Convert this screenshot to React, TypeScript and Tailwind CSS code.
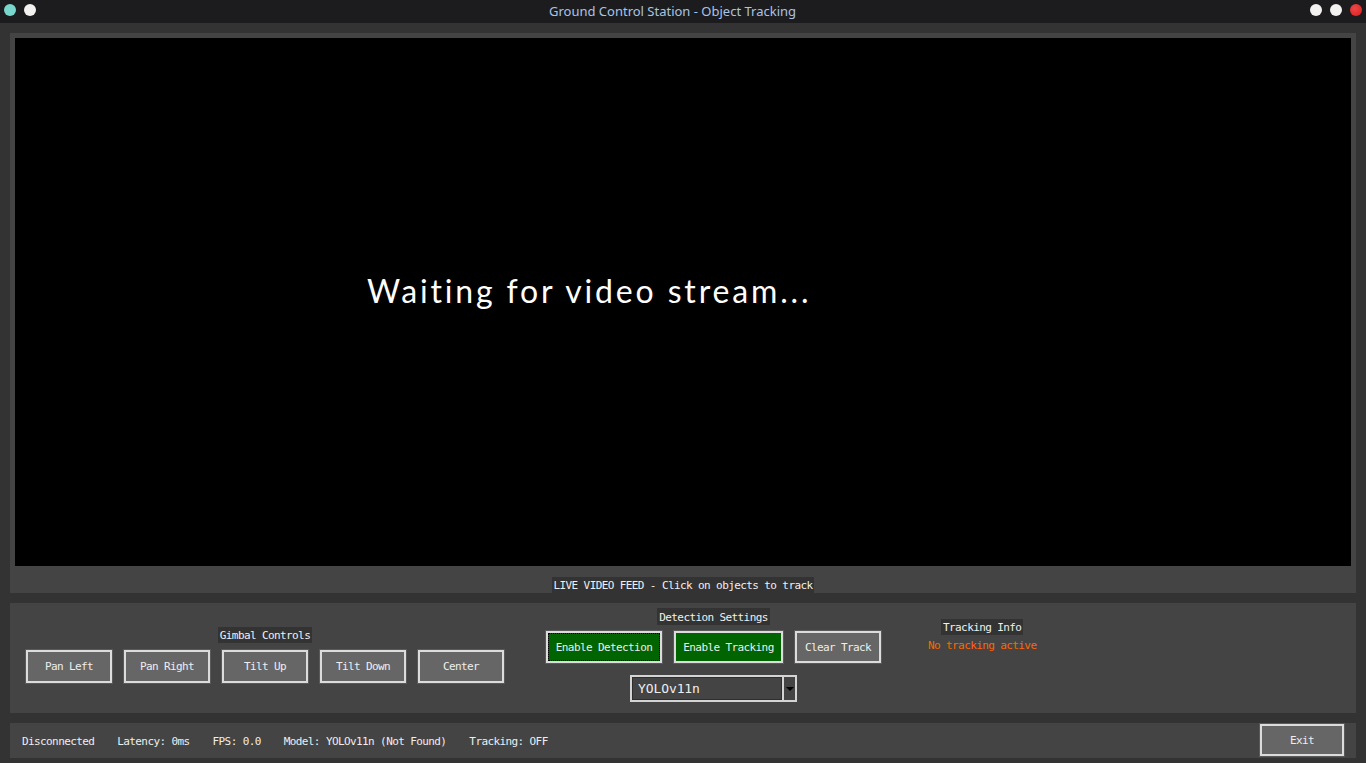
import React from 'react';

const mono = "font-['DejaVu_Sans_Mono','Liberation_Mono',monospace] text-[11px] tracking-[-0.6px]";

const Label: React.FC<{ text: string; className?: string }> = ({ text, className = '' }) => (
    <div className={`${mono} bg-[#333333] text-[#f0f0f0] px-[2px] h-[16px] leading-[18px] whitespace-nowrap overflow-hidden ${className}`}>
        {text}
    </div>
);

const TkButton: React.FC<{
    label: string;
    width: string;
    height?: string;
    green?: boolean;
    focused?: boolean;
}> = ({ label, width, height = 'h-[35px]', green, focused }) => (
    <button
        className={`${mono} ${width} ${height} shrink-0 pt-[2px] border border-[#5a5a5a] shadow-[inset_0_0_0_2px_#dcdcdc] text-[#eeeeee] flex items-center justify-center ${
            green ? 'bg-[#006400]' : 'bg-[#666666]'
        } ${focused ? 'outline outline-1 outline-dotted outline-black outline-offset-[-4px]' : ''}`}
    >
        {label}
    </button>
);

const Dot: React.FC<{ color: string }> = ({ color }) => (
    <div className={`w-[12px] h-[12px] rounded-full ${color}`}></div>
);

const TitleBar = () => (
    <div className="h-[23px] shrink-0 bg-[#1c1c1e] flex items-start">
        <div className="flex gap-[8px] pl-[4px] pt-[4px] w-[36px]">
            <Dot color="bg-[#79d6cc]" />
            <Dot color="bg-[#f4f1f1]" />
        </div>
        <div className="flex-1 text-center pr-[1px] font-['Noto_Sans',sans-serif] text-[13px] leading-[23px] text-[#aac4e4]">
            Ground Control Station - Object Tracking
        </div>
        <div className="flex gap-[8px] pr-[4px] pt-[4px]">
            <Dot color="bg-[#f4f1f1]" />
            <Dot color="bg-[#f4f1f1]" />
            <Dot color="bg-[radial-gradient(circle_at_40%_35%,#f04545,#d42020)]" />
        </div>
    </div>
);

const VideoPanel = () => (
    <div className="h-[560px] shrink-0 bg-[#444444] flex flex-col px-[5px] pt-[5px]">
        <div className="h-[528px] bg-black pl-[352px] pt-[237px]">
            <div className="font-['Lato',sans-serif] text-[32px] leading-[32px] tracking-[2.85px] text-white whitespace-nowrap">
                Waiting for video stream...
            </div>
        </div>
        <div className="flex-1 flex items-end justify-center">
            <Label text="LIVE VIDEO FEED - Click on objects to track" />
        </div>
    </div>
);

const ControlsPanel = () => (
    <div className="h-[110px] shrink-0 bg-[#444444] flex items-start">
        {/* Gimbal */}
        <div className="ml-[15px] mt-[24px] flex flex-col items-center gap-[6px]">
            <Label text="Gimbal Controls" />
            <div className="flex gap-[10px]">
                <TkButton label="Pan Left" width="w-[88px]" />
                <TkButton label="Pan Right" width="w-[88px]" />
                <TkButton label="Tilt Up" width="w-[88px]" />
                <TkButton label="Tilt Down" width="w-[88px]" />
                <TkButton label="Center" width="w-[88px]" />
            </div>
        </div>

        {/* Detection */}
        <div className="ml-[40px] mt-[5px] flex flex-col items-center">
            <Label text="Detection Settings" className="h-[17px] leading-[19px]" />
            <div className="flex gap-[10px] mt-[5px]">
                <TkButton label="Enable Detection" width="w-[118px]" height="h-[34px]" green focused />
                <TkButton label="Enable Tracking" width="w-[111px]" height="h-[34px]" green />
                <TkButton label="Clear Track" width="w-[88px]" height="h-[34px]" />
            </div>
            <div className="flex mt-[11px] h-[27px]">
                <div className="w-[154px] h-full border-2 border-[#d4d4d4] shadow-[inset_0_0_0_1px_#2e2e2e] flex items-center pl-[6px] pt-[1px] font-['DejaVu_Sans_Mono',monospace] text-[13px] tracking-[-0.1px] text-[#eeeeee]">
                    YOLOv11n
                </div>
                <div className="w-[13px] h-full border-2 border-l-0 border-[#d4d4d4] flex items-center justify-center">
                    <div className="w-0 h-0 border-l-[4px] border-r-[4px] border-t-[4px] border-l-transparent border-r-transparent border-t-black"></div>
                </div>
            </div>
        </div>

        {/* Tracking info */}
        <div className="ml-[46px] mt-[16px] flex flex-col items-center">
            <Label text="Tracking Info" />
            <div className={`${mono} text-[#ff6600] h-[18px] leading-[20px] mt-[1px]`}>No tracking active</div>
        </div>
    </div>
);

const StatusBar = () => (
    <div className="h-[35px] shrink-0 bg-[#444444] flex items-start">
        <div className={`${mono} text-[#eeeeee] flex gap-[23px] pl-[12px] pt-[3px] h-[35px] items-center`}>
            <span>Disconnected</span>
            <span>Latency: 0ms</span>
            <span>FPS: 0.0</span>
            <span>Model: YOLOv11n (Not Found)</span>
            <span>Tracking: OFF</span>
        </div>
        <div className="ml-auto mr-[11px]">
            <TkButton label="Exit" width="w-[86px]" height="h-[34px]" />
        </div>
    </div>
);

export default function App() {
    return (
        <div className="w-[1366px] h-[763px] bg-[#333333] flex flex-col overflow-hidden">
            <TitleBar />
            <div className="flex-1 flex flex-col gap-[10px] px-[10px] pt-[10px] pb-[5px]">
                <VideoPanel />
                <ControlsPanel />
                <StatusBar />
            </div>
        </div>
    );
}
